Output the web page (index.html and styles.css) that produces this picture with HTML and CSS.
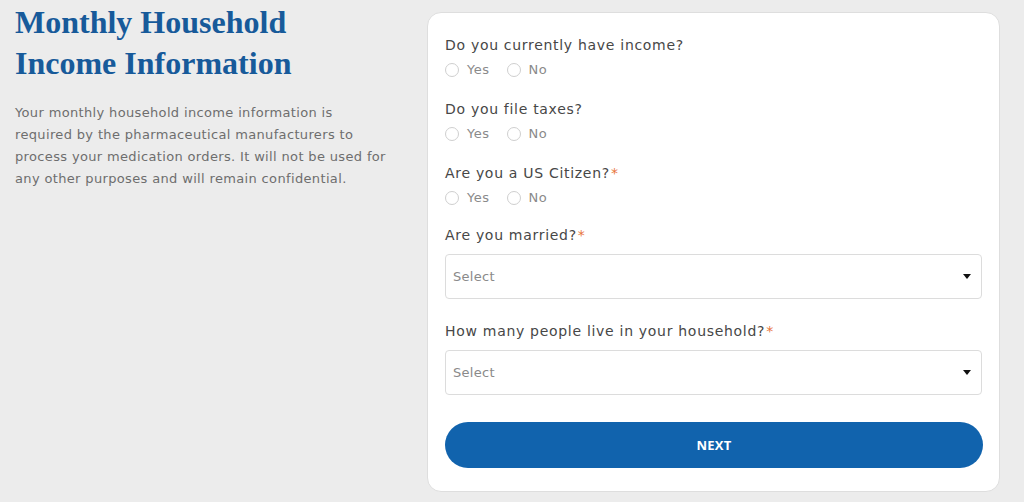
FILE: index.html
```html
<!DOCTYPE html>
<html>
<head>
<meta charset="utf-8">
<link rel="stylesheet" href="styles.css">
</head>
<body>
<div class="page">
  <div class="intro">
    <h1 class="title">Monthly Household<br>Income Information</h1>
    <p class="desc">Your monthly household income information is required by the pharmaceutical manufacturers to process your medication orders. It will not be used for any other purposes and will remain confidential.</p>
  </div>
  <div class="card">
    <div class="field">
      <div class="label">Do you currently have income?</div>
      <div class="radios">
        <span class="radio"><span class="dot"></span>Yes</span>
        <span class="radio"><span class="dot"></span>No</span>
      </div>
    </div>
    <div class="field">
      <div class="label">Do you file taxes?</div>
      <div class="radios">
        <span class="radio"><span class="dot"></span>Yes</span>
        <span class="radio"><span class="dot"></span>No</span>
      </div>
    </div>
    <div class="field last-radio">
      <div class="label">Are you a US Citizen?<span class="req">*</span></div>
      <div class="radios">
        <span class="radio"><span class="dot"></span>Yes</span>
        <span class="radio"><span class="dot"></span>No</span>
      </div>
    </div>
    <div class="field sel">
      <div class="label">Are you married?<span class="req">*</span></div>
      <div class="select"><span>Select</span><span class="caret"></span></div>
    </div>
    <div class="field sel">
      <div class="label">How many people live in your household?<span class="req">*</span></div>
      <div class="select"><span>Select</span><span class="caret"></span></div>
    </div>
    <button class="next">NEXT</button>
  </div>
</div>
</body>
</html>
```

FILE: styles.css
```css
* { box-sizing: border-box; }
html, body { margin: 0; padding: 0; }
body {
  background: #ececec;
  font-family: "DejaVu Sans", "Open Sans", sans-serif;
  width: 1024px;
  height: 502px;
  overflow: hidden;
}
.page {
  display: flex;
  padding: 12px 24px 10px 15px;
}
.intro {
  width: 412px;
  flex: none;
}
.title {
  margin: -10px 0 0 0;
  font-family: "Liberation Serif", "DejaVu Serif", serif;
  font-weight: bold;
  font-size: 32px;
  line-height: 41px;
  color: #175a9a;
}
.desc {
  margin: 18px 0 0 0;
  width: 372px;
  font-size: 13px;
  letter-spacing: 0.35px;
  line-height: 22px;
  color: #6e6e6e;
}
.card {
  width: 573px;
  height: 480px;
  background: #fff;
  border: 1px solid #dedede;
  border-radius: 14px;
  padding: 22px 17px 0 17px;
}
.field { margin-bottom: 19px; }
.field.last-radio { margin-bottom: 17px; }
.label {
  font-size: 14px;
  letter-spacing: 0.7px;
  line-height: 20px;
  color: #474747;
}
.req { color: #e8743b; margin-left: 1px; }
.radios {
  display: flex;
  gap: 17px;
  margin-top: 5px;
  font-size: 13px;
  letter-spacing: 0.5px;
  color: #8a8a8a;
  line-height: 20px;
}
.radio { display: flex; align-items: center; }
.dot {
  width: 14px;
  height: 14px;
  border: 1px solid #cfcfcf;
  border-radius: 50%;
  margin-right: 8px;
}
.field.sel { margin-bottom: 22px; }
.select {
  margin-top: 9px;
  height: 45px;
  border: 1px solid #dcdcdc;
  border-radius: 4px;
  display: flex;
  align-items: center;
  justify-content: space-between;
  padding: 0 10px 0 7px;
  font-size: 13px;
  letter-spacing: 0.3px;
  color: #8a8a8a;
}
.caret {
  width: 0; height: 0;
  border-left: 4px solid transparent;
  border-right: 4px solid transparent;
  border-top: 5px solid #111;
}
.next {
  display: block;
  width: 538px;
  height: 46px;
  margin-top: 27px;
  border: none;
  border-radius: 23px;
  background: #1163ad;
  color: #fff;
  font-family: "Open Sans", "Liberation Sans", sans-serif;
  font-weight: bold;
  font-size: 13px;
  letter-spacing: 0.2px;
}
.field.sel + .field.sel { margin-bottom: 0; }
```
